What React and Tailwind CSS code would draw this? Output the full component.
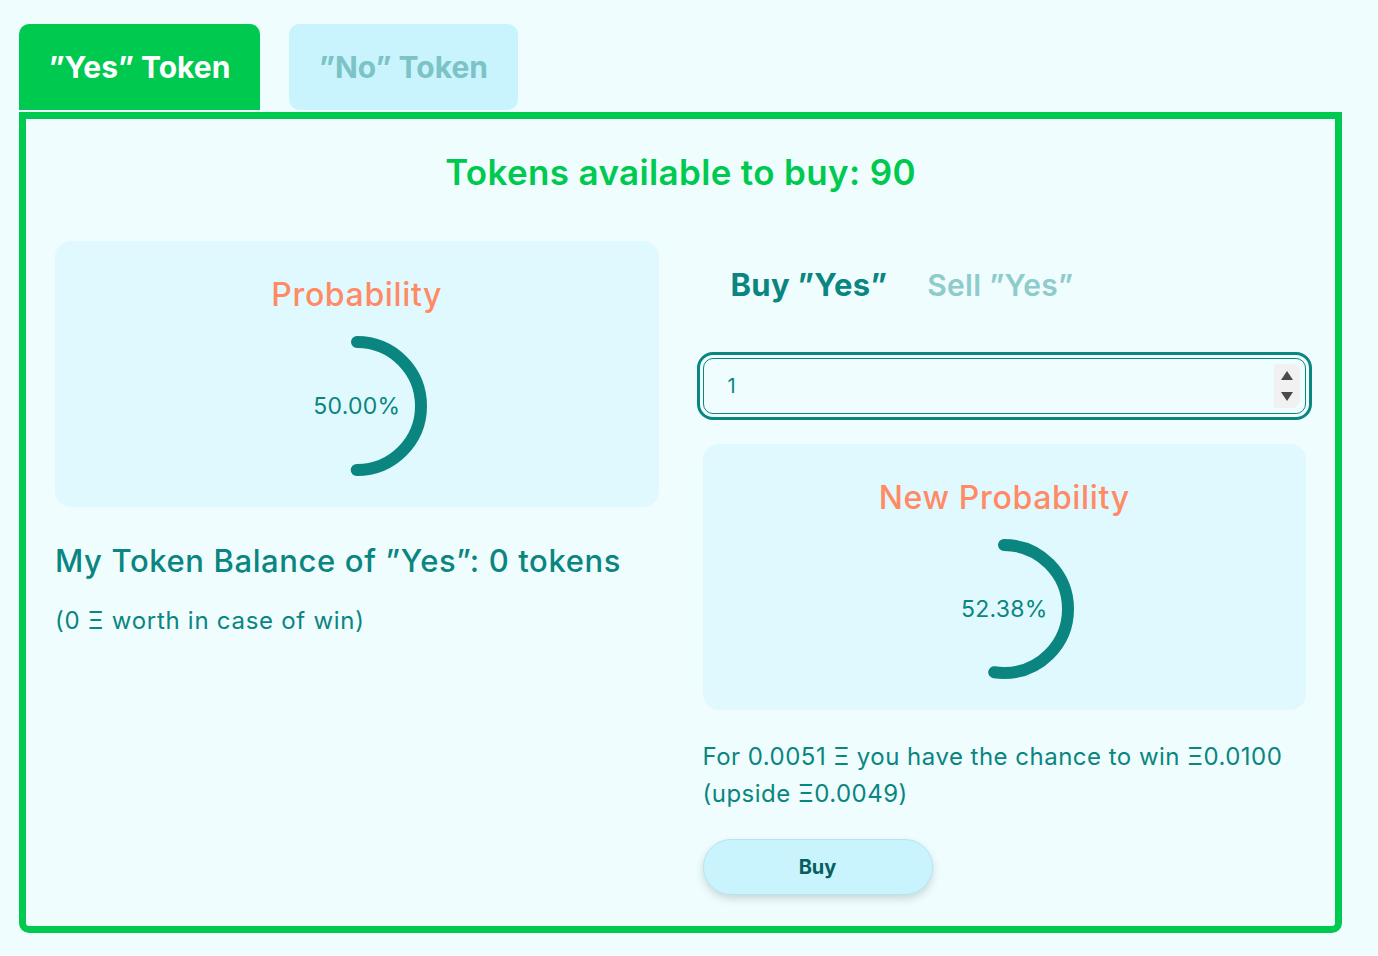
import React from 'react';

const TEAL = '#0a8580';

const Gauge = ({ value }) => {
  const r = 64;
  const c = 2 * Math.PI * r;
  const len = (value / 100) * c;
  return (
    <div className="relative w-[150px] h-[150px] flex items-center justify-center">
      <svg width="150" height="150" viewBox="0 0 150 150" className="absolute inset-0">
        <circle
          cx="75"
          cy="75"
          r={r}
          fill="none"
          stroke={TEAL}
          strokeWidth="12"
          strokeLinecap="round"
          strokeDasharray={`${len} ${c}`}
          transform="rotate(-90 75 75)"
        />
      </svg>
      <span className="relative text-[23px] tracking-[0.01em] text-[#0a8580]">{value.toFixed(2)}%</span>
    </div>
  );
};

const ProbCard = ({ title, value }) => (
  <div className="bg-[#e0f9fe] rounded-2xl h-[266px] flex flex-col items-center pt-[38px]">
    <h3 className="text-[32px] font-medium tracking-[0.02em] text-[#ff8a65] leading-none mb-[20px]">{title}</h3>
    <Gauge value={value} />
  </div>
);

const Spinner = () => (
  <div className="absolute right-[6px] top-[6px] bottom-[6px] w-[26px] bg-[#f1f1f1] rounded-r-[8px] flex flex-col items-center justify-center gap-[12px] pointer-events-none">
    <svg width="12" height="9" viewBox="0 0 12 9"><path d="M6 0 L12 9 L0 9 Z" fill="#4a4a4a" /></svg>
    <svg width="12" height="9" viewBox="0 0 12 9"><path d="M0 0 L12 0 L6 9 Z" fill="#4a4a4a" /></svg>
  </div>
);

export default function App() {
  return (
    <div
      className="min-h-[956px] bg-[#effdff] pt-6 pl-[19px] pr-9"
      style={{ fontFamily: 'Inter, "Noto Sans", sans-serif' }}
    >
      <div className="flex gap-[29px] items-end">
        <button className="w-[241px] h-[86px] rounded-t-[10px] bg-[#00c950] text-white text-[30px] font-bold">
          ”Yes” Token
        </button>
        <button className="w-[229px] h-[86px] rounded-[10px] bg-[#c9f4fe] text-[#7cc3c6] text-[30px] font-bold">
          ”No” Token
        </button>
      </div>
      <div className="mt-0.5 w-[1323px] h-[821px] border-[7px] border-[#00c950] rounded-b-[10px] px-[29px]">
        <h2 className="text-center text-[#00c950] text-[35px] font-semibold tracking-[0.01em] pt-[33px] leading-[40px]">
          Tokens available to buy: 90
        </h2>
        <div className="grid grid-cols-2 gap-11 mt-[49px]">
          <div>
            <ProbCard title="Probability" value={50} />
            <p className="mt-[36px] text-[31px] font-medium text-[#0a8580] tracking-[0.02em] leading-[36px]">
              My Token Balance of ”Yes”: 0 tokens
            </p>
            <p className="mt-[24px] text-[24px] tracking-[0.03em] text-[#0a8580]">(0 Ξ worth in case of win)</p>
          </div>
          <div>
            <div className="flex gap-[40px] pl-7 pt-[24px]">
              <span className="text-[31px] font-bold text-[#0a8580] tracking-[0.01em] leading-[40px]">Buy ”Yes”</span>
              <span className="text-[30px] font-semibold text-[#8ecbcb] tracking-[0.01em] leading-[40px]">Sell ”Yes”</span>
            </div>
            <div className="relative mt-[53px]">
              <input
                type="text"
                defaultValue="1"
                className="block w-full h-[56px] rounded-[10px] border border-[#0a8580] bg-[#effdff] pl-6 text-[20px] text-[#0a8580] outline-[3px] outline-solid outline-[#0a8580] outline-offset-[3px]"
              />
              <Spinner />
            </div>
            <div className="mt-[30px]">
              <ProbCard title="New Probability" value={52.38} />
            </div>
            <p className="mt-[28px] text-[24px] tracking-[0.02em] text-[#0a8580] leading-[37px]">
              For 0.0051 Ξ you have the chance to win Ξ0.0100 (upside Ξ0.0049)
            </p>
            <button className="mt-[27px] w-[230px] h-[56px] rounded-full bg-[#c9f4fe] border border-[#b5e6ef] shadow-[0_4px_8px_rgba(0,0,0,0.15)] text-[20px] font-bold text-[#075e5c]">
              Buy
            </button>
          </div>
        </div>
      </div>
    </div>
  );
}
